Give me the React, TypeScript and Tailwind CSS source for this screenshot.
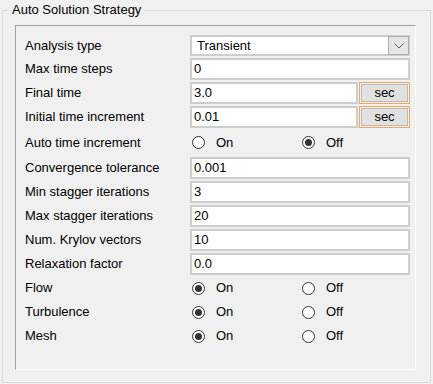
const font = { fontFamily: '"Liberation Sans", Arial, sans-serif' };

function Field({ value, className = '' }: { value: string; className?: string }) {
  return (
    <div
      className={`h-[22px] border-2 border-[#cdcdcd] bg-white pl-[2px] flex items-center text-[13px] text-black ${className}`}
    >
      {value}
    </div>
  );
}

function Unit({ label }: { label: string }) {
  return (
    <div className="w-[51px] h-[22px] border border-[#f5a652] p-px">
      <div className="h-full border border-[#b9b9b9] bg-[#e1e1e1] flex items-center justify-center text-[13px]">
        {label}
      </div>
    </div>
  );
}

function Radio({ checked, label }: { checked: boolean; label: string }) {
  return (
    <div className="w-[110px] flex items-center">
      <span className="w-[13px] h-[13px] rounded-full border border-[#333333] bg-white flex items-center justify-center">
        {checked && <span className="w-[7px] h-[7px] rounded-full bg-[#333333]" />}
      </span>
      <span className="ml-[11px] text-[13px]">{label}</span>
    </div>
  );
}

function Row({ label, children, h = 'h-[22px]' }: { label: string; children: React.ReactNode; h?: string }) {
  return (
    <div className={`flex items-center ${h}`}>
      <div className="w-[165px] text-[13px] text-black">{label}</div>
      <div className="w-[220px] flex items-center">{children}</div>
    </div>
  );
}

export default function App() {
  return (
    <div className="w-[433px] h-[384px] bg-[#f0f0f0] pt-[3px] px-[2px] text-black" style={font}>
      <fieldset className="h-[380px] border border-[#dcdcdc]">
        <legend className="ml-[6px] px-[3px] text-[13px] leading-[14px]">Auto Solution Strategy</legend>
        <div className="ml-[12px] mr-[14px] mt-[8px] h-[345px] border border-t-[#a0a0a0] border-l-[#a0a0a0] border-r-white border-b-white pt-[9px] pl-[9px]">
          <div className="flex flex-col gap-[2px]">
            <Row label="Analysis type" h="h-[21px]">
              <div className="w-full h-[21px] border-2 border-[#cdcdcd] bg-white flex items-center">
                <span className="flex-1 pl-[5px] text-[13px]">Transient</span>
                <span className="w-[21px] h-[19px] -mr-[1px] border border-[#adadad] bg-[#e5e5e5] flex items-center justify-center">
                  <svg width="10" height="6" viewBox="0 0 10 6">
                    <path d="M0.5 0.5 L5 5 L9.5 0.5" fill="none" stroke="#606060" strokeWidth="1" />
                  </svg>
                </span>
              </div>
            </Row>
            <Row label="Max time steps">
              <Field value="0" className="w-full" />
            </Row>
            <Row label="Final time">
              <Field value="3.0" className="w-[168px] mr-px" />
              <Unit label="sec" />
            </Row>
            <Row label="Initial time increment">
              <Field value="0.01" className="w-[168px] mr-px" />
              <Unit label="sec" />
            </Row>
            <Row label="Auto time increment" h="h-[25px]">
              <div className="flex ml-[2px]">
                <Radio checked={false} label="On" />
                <Radio checked={true} label="Off" />
              </div>
            </Row>
            <Row label="Convergence tolerance">
              <Field value="0.001" className="w-full" />
            </Row>
            <Row label="Min stagger iterations">
              <Field value="3" className="w-full" />
            </Row>
            <Row label="Max stagger iterations">
              <Field value="20" className="w-full" />
            </Row>
            <Row label="Num. Krylov vectors">
              <Field value="10" className="w-full" />
            </Row>
            <Row label="Relaxation factor">
              <Field value="0.0" className="w-full" />
            </Row>
            <Row label="Flow">
              <div className="flex ml-[2px]">
                <Radio checked={true} label="On" />
                <Radio checked={false} label="Off" />
              </div>
            </Row>
            <Row label="Turbulence">
              <div className="flex ml-[2px]">
                <Radio checked={true} label="On" />
                <Radio checked={false} label="Off" />
              </div>
            </Row>
            <Row label="Mesh">
              <div className="flex ml-[2px]">
                <Radio checked={true} label="On" />
                <Radio checked={false} label="Off" />
              </div>
            </Row>
          </div>
        </div>
      </fieldset>
    </div>
  );
}
